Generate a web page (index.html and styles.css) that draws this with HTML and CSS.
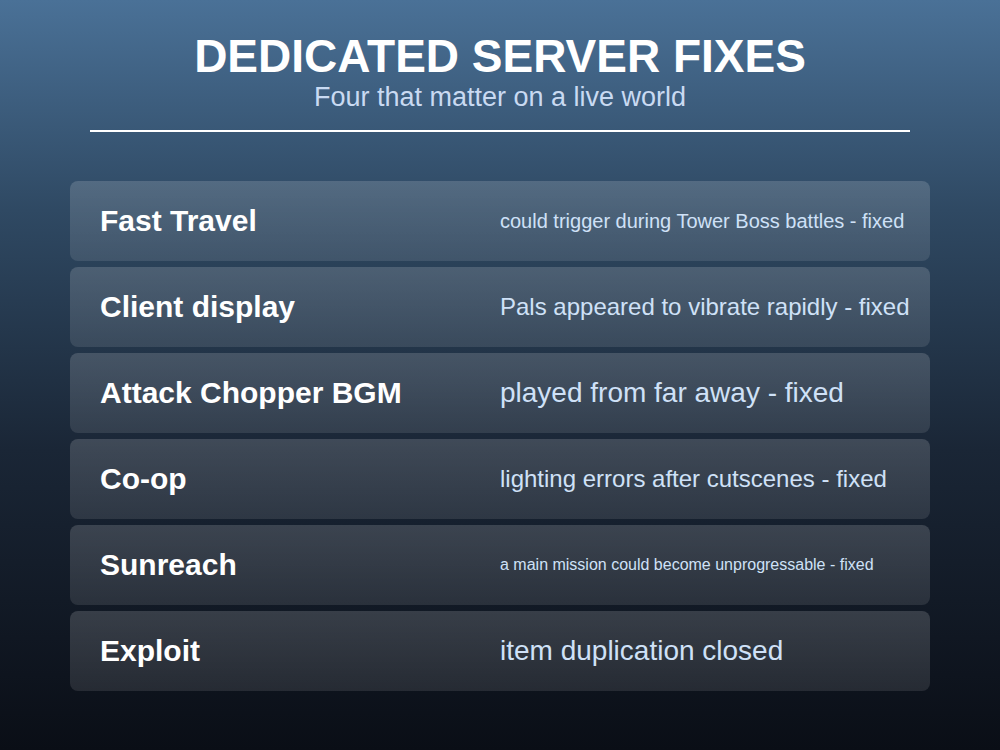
FILE: index.html
```html
<!DOCTYPE html>
<html>
  <head>
    <link rel="stylesheet" href="styles.css">
  </head>
  <body>
    <div class="slide">
      <div class="header">
        <h1 class="title">DEDICATED SERVER FIXES</h1>
        <div class="subtitle">Four that matter on a live world</div>
      </div>
      <div class="rule"></div>
      <div class="fixes">
        <div class="fix">
          <span class="fix-name">Fast Travel</span>
          <span class="fix-desc size-s">could trigger during Tower Boss battles - fixed</span>
        </div>
        <div class="fix">
          <span class="fix-name">Client display</span>
          <span class="fix-desc size-m">Pals appeared to vibrate rapidly - fixed</span>
        </div>
        <div class="fix">
          <span class="fix-name">Attack Chopper BGM</span>
          <span class="fix-desc size-l">played from far away - fixed</span>
        </div>
        <div class="fix">
          <span class="fix-name">Co-op</span>
          <span class="fix-desc size-m">lighting errors after cutscenes - fixed</span>
        </div>
        <div class="fix">
          <span class="fix-name">Sunreach</span>
          <span class="fix-desc size-xs">a main mission could become unprogressable - fixed</span>
        </div>
        <div class="fix">
          <span class="fix-name">Exploit</span>
          <span class="fix-desc size-l">item duplication closed</span>
        </div>
      </div>
    </div>
  </body>
</html>
```

FILE: styles.css
```css
html,
body {
  margin: 0;
  padding: 0;
  height: 100%;
}

body {
  font-family: "Liberation Sans", Arial, sans-serif;
  background: linear-gradient(to bottom, #4a7197 0%, #2f4963 28%, #1a2636 60%, #0a0e16 100%);
}

.slide {
  width: 1000px;
  height: 750px;
  box-sizing: border-box;
  padding-top: 30px;
}

.header {
  text-align: center;
}

.title {
  margin: 0;
  font-size: 46px;
  line-height: 52px;
  font-weight: bold;
  color: #ffffff;
}

.subtitle {
  font-size: 27px;
  line-height: 30px;
  color: #c9daf2;
}

.rule {
  height: 2px;
  margin: 18px 90px 0;
  background: #ffffff;
}

.fixes {
  display: flex;
  flex-direction: column;
  gap: 6px;
  margin: 49px 70px 0;
}

.fix {
  display: flex;
  align-items: center;
  height: 80px;
  padding-left: 30px;
  border-radius: 8px;
  background: linear-gradient(to bottom, rgba(255, 255, 255, 0.16), rgba(255, 255, 255, 0.1));
}

.fix-name {
  width: 400px;
  flex-shrink: 0;
  font-size: 30px;
  font-weight: bold;
  color: #ffffff;
}

.fix-desc {
  color: #cfe1f7;
  white-space: nowrap;
}

.size-xs {
  font-size: 16px;
}

.size-s {
  font-size: 20px;
}

.size-m {
  font-size: 24px;
}

.size-l {
  font-size: 28px;
}
```
